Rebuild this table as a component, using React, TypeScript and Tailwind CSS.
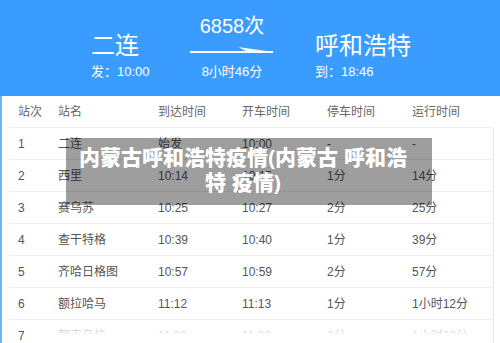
import React from "react";

const rows = [
  { no: "1", name: "二连", arrive: "始发", depart: "10:00", stop: "-", run: "-" },
  { no: "2", name: "西里", arrive: "10:14", depart: "10:15", stop: "1分", run: "14分" },
  { no: "3", name: "赛乌苏", arrive: "10:25", depart: "10:27", stop: "2分", run: "25分" },
  { no: "4", name: "查干特格", arrive: "10:39", depart: "10:40", stop: "1分", run: "39分" },
  { no: "5", name: "齐哈日格图", arrive: "10:57", depart: "10:59", stop: "2分", run: "57分" },
  { no: "6", name: "额拉哈马", arrive: "11:12", depart: "11:13", stop: "1分", run: "1小时12分" },
  { no: "7", name: "朝克乌拉", arrive: "11:30", depart: "11:32", stop: "2分", run: "1小时30分" },
];

const font = { fontFamily: '"Liberation Sans", "Noto Sans CJK SC", sans-serif' };

export default function App() {
  return (
    <div className="relative w-[500px] h-[343px] overflow-hidden bg-white" style={font}>
      {/* train header */}
      <div className="h-[96px] bg-[#3a9cff] text-white flex pl-[91px]">
        <div className="w-[99px] pt-[32px]">
          <p className="text-[24px] leading-[28px]">二连</p>
          <p className="mt-[4px] text-[13px] leading-[16px]">发：10:00</p>
        </div>
        <div className="w-[84px] pt-[14px] flex flex-col items-center">
          <p className="text-[20px] leading-[24px]">6858次</p>
          <svg width="84" height="10" viewBox="0 0 84 10" className="mt-[6px]">
            <line x1="0" y1="8" x2="83" y2="8" stroke="white" strokeWidth="2" />
            <path d="M48 3 L83 8 L58 8 Z" fill="white" />
          </svg>
          <p className="mt-[10px] text-[13px] leading-[16px]">8小时46分</p>
        </div>
        <div className="ml-[41px] pt-[32px]">
          <p className="text-[24px] leading-[28px]">呼和浩特</p>
          <p className="mt-[4px] text-[13px] leading-[16px]">到：18:46</p>
        </div>
      </div>

      {/* timetable */}
      <div className="flex border-l-2 border-[#6cb4ff] h-[247px]">
        <div className="flex-1 pl-[6px]">
          <div className="grid grid-cols-[50px_100px_84px_85px_85px_1fr] h-[32px] items-center text-[12px] text-[#666] border-b border-[#eeeeee]">
            <span className="pl-[10px]">站次</span>
            <span>站名</span>
            <span>到达时间</span>
            <span>开车时间</span>
            <span>停车时间</span>
            <span>运行时间</span>
          </div>
          {rows.map((r) => (
            <div
              key={r.no}
              className="grid grid-cols-[50px_100px_84px_85px_85px_1fr] h-[32px] items-center text-[12px] text-[#555] border-b border-[#eeeeee]"
            >
              <span className="pl-[10px]">{r.no}</span>
              <span>{r.name}</span>
              <span>{r.arrive}</span>
              <span>{r.depart}</span>
              <span>{r.stop}</span>
              <span>{r.run}</span>
            </div>
          ))}
        </div>
        <div className="w-[7px] mt-[32px] border-l border-[#e6e6e6]" />
      </div>

      {/* fade at bottom */}
      <div className="absolute left-[24px] right-[15px] top-[328px] h-[15px] bg-gradient-to-b from-white/60 via-white to-white" />

      {/* caption overlay */}
      <div className="absolute left-[66px] top-[138px] w-[366px] h-[67px] bg-[rgba(0,0,0,0.38)] pt-[7px] pl-[8px] pr-[20px] text-center text-white font-extrabold text-[21px] leading-[25px]">
        内蒙古呼和浩特疫情(内蒙古 呼和浩特 疫情)
      </div>
    </div>
  );
}
